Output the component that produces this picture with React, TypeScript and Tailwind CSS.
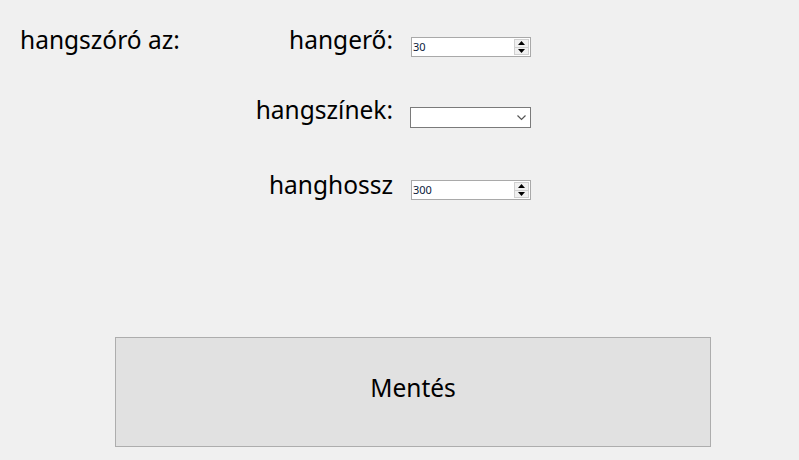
export default function App() {
  return (
    <div
      className="w-[799px] h-[460px] bg-[#f0f0f0] text-black overflow-hidden"
      style={{ fontFamily: '"Segoe UI", "Noto Sans", "Open Sans", sans-serif' }}
    >
      <div className="flex flex-col pt-[24px]">
        {/* row 1 */}
        <div className="flex items-start">
          <div className="w-[393px] flex justify-between pl-[20px] text-[24.5px] leading-[32px]">
            <span>hangszóró az:</span>
            <span>hangerő:</span>
          </div>
          <div className="ml-[18px] mt-[13px]">
            <NumericBox value="30" />
          </div>
        </div>

        {/* row 2 */}
        <div className="flex items-start mt-[37px]">
          <div className="w-[393px] text-right text-[24.5px] leading-[32px]">hangszínek:</div>
          <div className="ml-[17px] mt-[13px]">
            <ComboBox />
          </div>
        </div>

        {/* row 3 */}
        <div className="flex items-start mt-[41px]">
          <div className="w-[393px] text-right text-[24.5px] leading-[32px]">hanghossz</div>
          <div className="ml-[18px] mt-[11px]">
            <NumericBox value="300" />
          </div>
        </div>

        {/* save button */}
        <button className="ml-[115px] mt-[136px] w-[596px] h-[110px] bg-[#e1e1e1] border border-[#adadad] text-[24.5px] leading-[32px] pb-[8px]">
          Mentés
        </button>
      </div>
    </div>
  );
}

function NumericBox({ value }: { value: string }) {
  return (
    <div className="w-[120px] h-[20px] bg-white border border-[#a9a9a9] flex items-stretch">
      <div className="flex-1 pl-[1px] text-[11px] leading-[18px] text-[#0a1a3a]">{value}</div>
      <div className="w-[15px] my-[1px] mr-[1px] flex flex-col border border-[#d0d0d0] bg-[#f0f0f0]">
        <div className="flex-1 flex items-center justify-center border-b border-[#d0d0d0]">
          <svg width="7" height="4" viewBox="0 0 7 4">
            <path d="M0 4 L3.5 0 L7 4 Z" fill="#000" />
          </svg>
        </div>
        <div className="flex-1 flex items-center justify-center">
          <svg width="7" height="4" viewBox="0 0 7 4">
            <path d="M0 0 L3.5 4 L7 0 Z" fill="#000" />
          </svg>
        </div>
      </div>
    </div>
  );
}

function ComboBox() {
  return (
    <div className="w-[121px] h-[21px] bg-white border border-[#7a7a7a] flex items-center justify-end pr-[4px]">
      <svg width="9" height="6" viewBox="0 0 9 6">
        <path d="M0.5 0.5 L4.5 4.5 L8.5 0.5" fill="none" stroke="#555" strokeWidth="1.2" />
      </svg>
    </div>
  );
}
